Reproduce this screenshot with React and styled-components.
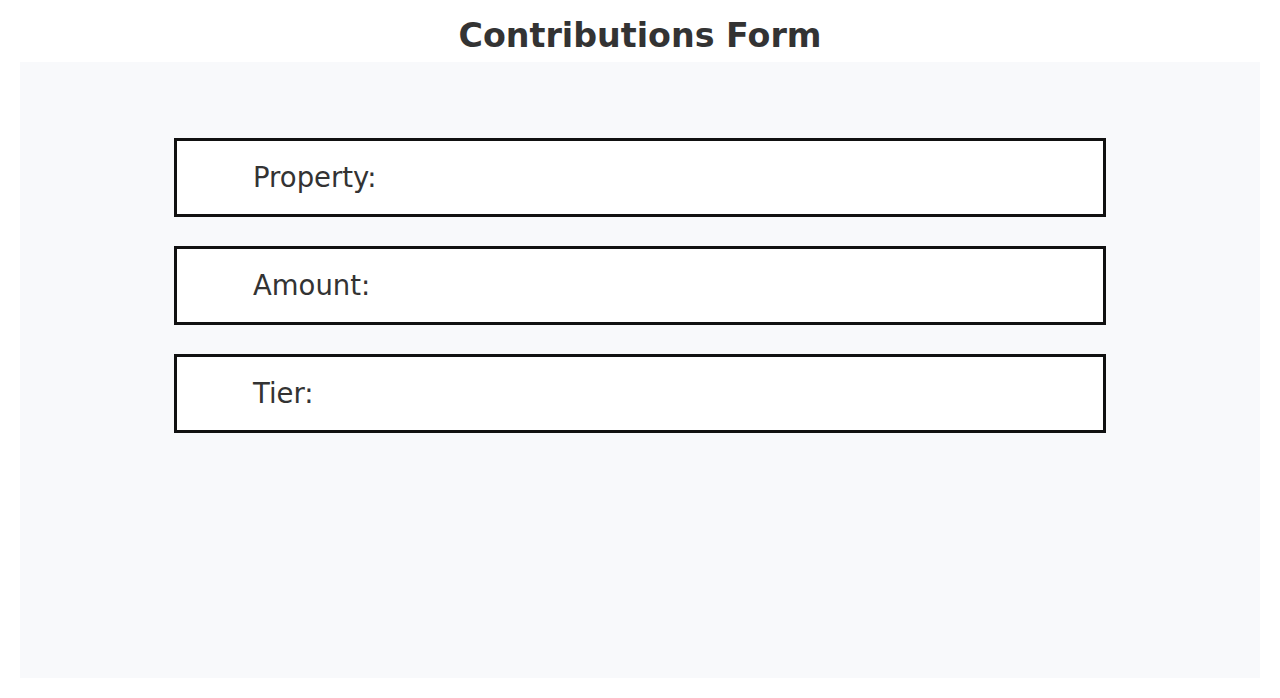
import styled, { createGlobalStyle } from "styled-components";

const Global = createGlobalStyle`
  body {
    margin: 0;
    background: #ffffff;
    font-family: "DejaVu Sans", "Liberation Sans", sans-serif;
  }
`;

const Page = styled.div`
  padding: 0 20px 20px;
`;

const Title = styled.h1`
  margin: 0;
  height: 62px;
  display: flex;
  align-items: center;
  justify-content: center;
  font-size: 33.3px;
  font-weight: bold;
  color: #333333;
  padding-top: 8px;
  box-sizing: border-box;
`;

const Panel = styled.section`
  background: #f8f9fb;
  height: 616px;
  padding-top: 76px;
  box-sizing: border-box;
  display: flex;
  flex-direction: column;
  align-items: center;
  gap: 29px;
`;

const Field = styled.div`
  width: 932px;
  height: 79px;
  box-sizing: border-box;
  border: 3px solid #111111;
  background: #ffffff;
  display: flex;
  align-items: center;
  padding-left: 76px;
  padding-bottom: 2px;
`;

const Label = styled.label`
  font-size: 27.5px;
  color: #333333;
`;

const fields = ["Property:", "Amount:", "Tier:"];

const App = () => {
  return (
    <>
      <Global />
      <Page>
        <Title>Contributions Form</Title>
        <Panel>
          {fields.map((f) => (
            <Field key={f}>
              <Label>{f}</Label>
            </Field>
          ))}
        </Panel>
      </Page>
    </>
  );
};

export default App;
